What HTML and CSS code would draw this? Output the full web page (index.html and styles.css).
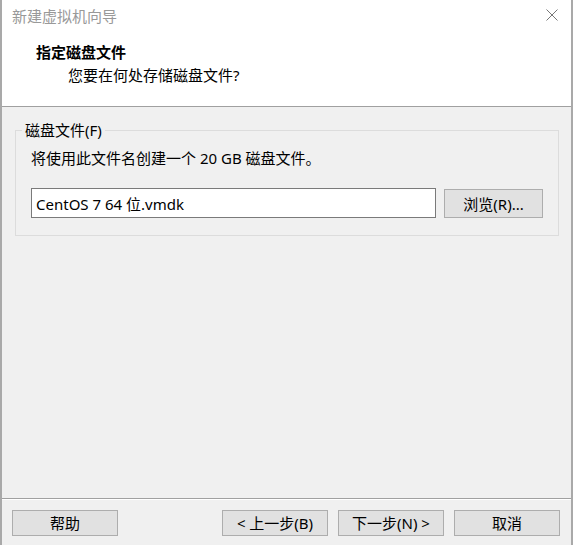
FILE: index.html
```html
<!DOCTYPE html>
<html lang="zh-CN">
<head>
  <meta charset="UTF-8" />
  <title>新建虚拟机向导</title>
  <link rel="stylesheet" href="styles.css">
</head>
<body>

  <div class="window">

    <!-- Title + header -->
    <div class="top">
      <div class="titlebar">
        <span class="title-text">新建虚拟机向导</span>
        <svg class="close" width="12" height="12" viewBox="0 0 12 12">
          <path d="M0.5 0.5 L11.5 11.5 M11.5 0.5 L0.5 11.5" stroke="#777" stroke-width="1" fill="none"/>
        </svg>
      </div>
      <div class="header">
        <div class="header-title">指定磁盘文件</div>
        <div class="header-sub">您要在何处存储磁盘文件?</div>
      </div>
    </div>

    <!-- Main -->
    <div class="content">
      <fieldset class="group">
        <legend>磁盘文件(F)</legend>
        <div class="group-body">
          <div class="info">将使用此文件名创建一个 20 GB 磁盘文件。</div>
          <div class="file-row">
            <input type="text" class="file-input" value="CentOS 7 64 位.vmdk">
            <button class="btn browse">浏览(R)...</button>
          </div>
        </div>
      </fieldset>
    </div>

    <!-- Footer -->
    <div class="footer">
      <button class="btn">帮助</button>
      <div class="footer-right">
        <button class="btn">&lt; 上一步(B)</button>
        <button class="btn">下一步(N) &gt;</button>
        <button class="btn">取消</button>
      </div>
    </div>

  </div>

</body>
</html>
```

FILE: styles.css
```css
* {
  box-sizing: border-box;
}

body {
  margin: 0;
  padding: 0;
  font-family: "Noto Sans", "Noto Sans CJK SC", sans-serif;
  font-size: 15px;
  color: #000;
  background: #f0f0f0;
}

.window {
  width: 573px;
  height: 545px;
  display: flex;
  flex-direction: column;
  border-left: 2px solid #a9a9a9;
  border-right: 2px solid #a9a9a9;
  background: #f0f0f0;
}

.top {
  background: #fff;
  height: 107px;
  border-bottom: 1px solid #a0a0a0;
}

.titlebar {
  height: 32px;
  display: flex;
  align-items: center;
  justify-content: space-between;
  padding-left: 10px;
  padding-right: 13px;
}

.title-text {
  color: #999;
  line-height: 32px;
}

.close {
  display: block;
  margin-top: -2px;
}

.header {
  padding: 10px 0 0 34px;
}

.header-title {
  font-weight: bold;
  line-height: 21px;
}

.header-sub {
  line-height: 21px;
  margin-top: 2px;
  padding-left: 32px;
}

.content {
  flex: 1;
  padding: 14px 12px 0 13px;
}

.group {
  margin: 0;
  padding: 0;
  border: 1px solid #dcdcdc;
  min-width: 0;
}

.group legend {
  margin-left: 6px;
  padding: 0 3px;
  line-height: 18px;
}

.group-body {
  padding: 9px 15px 17px 15px;
}

.info {
  line-height: 20px;
}

.file-row {
  display: flex;
  gap: 8px;
  margin-top: 20px;
  align-items: flex-start;
}

.file-input {
  flex: 1;
  height: 30px;
  border: 1px solid #7a7a7a;
  background: #fff;
  padding: 0 4px;
  font-family: inherit;
  font-size: 15px;
  color: #000;
  outline: none;
}

.btn {
  width: 106px;
  height: 26px;
  background: #e1e1e1;
  border: 1px solid #adadad;
  padding: 0;
  font-family: inherit;
  font-size: 15px;
  color: #000;
  line-height: 24px;
}

.browse {
  width: 99px;
  height: 29px;
  margin-top: 1px;
}

.footer {
  border-top: 1px solid #a0a0a0;
  box-shadow: inset 0 1px 0 #fff;
  height: 47px;
  padding: 11px 11px 0 10px;
  display: flex;
  justify-content: space-between;
  align-items: flex-start;
}

.footer-right {
  display: flex;
  gap: 10px;
}
```
